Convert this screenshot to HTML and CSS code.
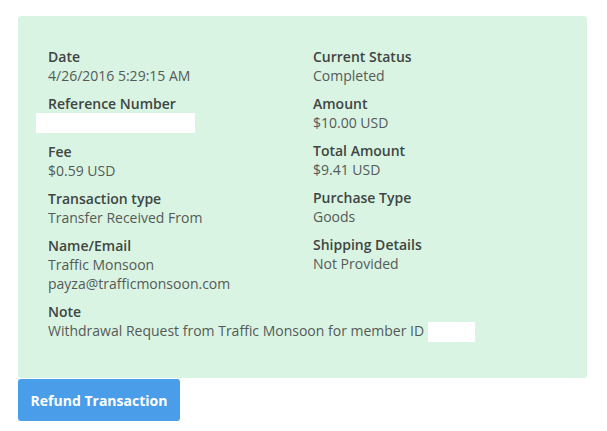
FILE: index.html
```html
<!DOCTYPE html>
<html>
<head>
<meta charset="utf-8">
<link rel="stylesheet" href="styles.css">
</head>
<body>
<div class="page">
  <div class="panel">
    <div class="grid">
      <div class="col">
        <div class="item"><div class="label">Date</div><div class="value">4/26/2016 5:29:15 AM</div></div>
        <div class="item"><div class="label">Reference Number</div><div class="value"><span class="redact ref"></span></div></div>
        <div class="item"><div class="label">Fee</div><div class="value">$0.59 USD</div></div>
        <div class="item"><div class="label">Transaction type</div><div class="value">Transfer Received From</div></div>
        <div class="item"><div class="label">Name/Email</div><div class="value">Traffic Monsoon<br>payza@trafficmonsoon.com</div></div>
      </div>
      <div class="col">
        <div class="item"><div class="label">Current Status</div><div class="value">Completed</div></div>
        <div class="item"><div class="label">Amount</div><div class="value">$10.00 USD</div></div>
        <div class="item"><div class="label">Total Amount</div><div class="value">$9.41 USD</div></div>
        <div class="item"><div class="label">Purchase Type</div><div class="value">Goods</div></div>
        <div class="item"><div class="label">Shipping Details</div><div class="value">Not Provided</div></div>
      </div>
    </div>
    <div class="item note"><div class="label">Note</div><div class="value">Withdrawal Request from Traffic Monsoon for member ID <span class="redact mid"></span></div></div>
  </div>
  <button class="btn">Refund Transaction</button>
</div>
</body>
</html>
```
FILE: styles.css
```css
html, body { margin: 0; padding: 0; background: #fff; }
body { font-family: "Open Sans", "Noto Sans", sans-serif; font-size: 14px; color: #555; }
.page { padding: 16px 20px 0 18px; }
.panel {
  background: #d9f4e3;
  border-radius: 3px;
  padding: 31px 30px 36px 30px;
}
.grid { display: grid; grid-template-columns: 265px 1fr; }
.col { display: flex; flex-direction: column; gap: 9px; }
.item { line-height: 19px; }
.label { font-weight: 600; color: #3f4542; }
.value { color: #555a57; }
.note { margin-top: 9px; }
.redact { display: inline-block; background: #fff; vertical-align: top; }
.ref { width: 159px; height: 20px; margin-left: -12px; }
.mid { width: 47px; height: 20px; margin-top: 1px; }
.btn {
  display: block;
  margin-top: 1px;
  width: 162px;
  height: 42px;
  background: #4a9de9;
  color: #fff;
  border: none;
  border-radius: 3px;
  font-family: "Open Sans", "Noto Sans", sans-serif;
  font-weight: 700;
  font-size: 14px;
  padding: 0;
}
```
